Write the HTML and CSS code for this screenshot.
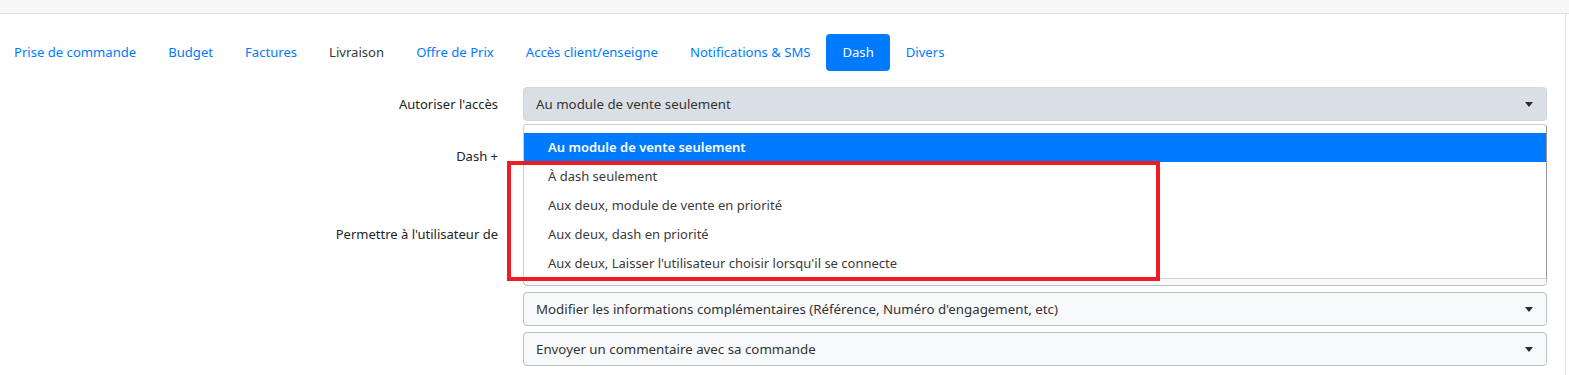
FILE: index.html
```html
<!DOCTYPE html>
<html>
<head>
    <meta charset="UTF-8">
    <title>Paramètres - Dash</title>
    <link rel="stylesheet" href="styles.css">
</head>
<body>
    <div class="topbar"></div>
    <div class="panel">
        <ul class="nav">
            <li><a class="nav-link">Prise de commande</a></li>
            <li><a class="nav-link">Budget</a></li>
            <li><a class="nav-link">Factures</a></li>
            <li><a class="nav-link muted">Livraison</a></li>
            <li><a class="nav-link">Offre de Prix</a></li>
            <li><a class="nav-link">Accès client/enseigne</a></li>
            <li><a class="nav-link">Notifications &amp; SMS</a></li>
            <li><a class="nav-link active">Dash</a></li>
            <li><a class="nav-link">Divers</a></li>
        </ul>

        <div class="form">
            <div class="form-row row-access">
                <label class="label">Autoriser l'accès</label>
                <div class="field">
                    <div class="select focused">
                        <span>Au module de vente seulement</span>
                        <span class="caret"></span>
                    </div>
                    <ul class="popup">
                        <li class="option selected">Au module de vente seulement</li>
                        <li class="option">À dash seulement</li>
                        <li class="option">Aux deux, module de vente en priorité</li>
                        <li class="option">Aux deux, dash en priorité</li>
                        <li class="option">Aux deux, Laisser l'utilisateur choisir lorsqu'il se connecte</li>
                    </ul>
                    <div class="highlight"></div>
                </div>
            </div>

            <!-- selects below sit under the open list, their values are hidden -->
            <div class="form-row row-dash">
                <label class="label">Dash +</label>
                <div class="field">
                    <div class="select plain">
                        <span class="caret"></span>
                    </div>
                </div>
            </div>

            <div class="form-row row-perms">
                <label class="label label-top">Permettre à l'utilisateur de</label>
                <div class="field stack">
                    <div class="select">
                        <span class="caret"></span>
                    </div>
                    <div class="select">
                        <span class="caret"></span>
                    </div>
                    <div class="select">
                        <span>Modifier les informations complémentaires (Référence, Numéro d'engagement, etc)</span>
                        <span class="caret"></span>
                    </div>
                    <div class="select">
                        <span>Envoyer un commentaire avec sa commande</span>
                        <span class="caret"></span>
                    </div>
                </div>
            </div>
        </div>
    </div>
</body>
</html>
```

FILE: styles.css
```css
/* Base */
* {
    margin: 0;
    padding: 0;
    box-sizing: border-box;
}

html, body {
    height: 100%;
    overflow: hidden;
}

body {
    font-family: 'Noto Sans', 'Open Sans', sans-serif;
    font-size: 13px;
    color: #212529;
    background-color: #fff;
}

.topbar {
    height: 14px;
    background-color: #f7f7f7;
    border-bottom: 1px solid #dedede;
}

.panel {
    width: 1566px;
    height: 361px;
    border-right: 1px solid #dee2e6;
    padding: 20px 18px 0 0;
}

/* Tabs */
.nav {
    display: flex;
    list-style: none;
    margin-left: -2px;
}

.nav-link {
    display: block;
    padding: 8px 16px;
    line-height: 21px;
    font-size: 13.1px;
    color: #007bff;
    border-radius: 4px;
    cursor: pointer;
}

.nav-link.muted {
    color: #343a40;
}

.nav-link.active {
    background-color: #007bff;
    color: #fff;
}

/* Form */
.form {
    margin-top: 16px;
}

.form-row {
    display: grid;
    grid-template-columns: 498px 1fr;
    column-gap: 25px;
}

.row-access {
    margin-bottom: 18px;
}

.row-dash {
    margin-bottom: 39px;
}

.label {
    text-align: right;
    line-height: 34px;
    color: #212529;
}

.label-top {
    line-height: 21px;
    padding-top: 12px;
}

.field {
    position: relative;
}

.stack {
    display: flex;
    flex-direction: column;
    gap: 6px;
}

.select {
    display: flex;
    justify-content: space-between;
    align-items: center;
    height: 34px;
    padding: 0 13px 0 12px;
    border: 1px solid #b9bfc6;
    border-radius: 4px;
    background-color: #f8f9fa;
    font-size: 13.3px;
    color: #333;
}

.select.focused {
    background-color: #dadfe6;
    border-color: #d3d8df;
}

.select.plain {
    background-color: #fff;
}

.caret {
    width: 0;
    height: 0;
    margin-left: auto;
    border-left: 4px solid transparent;
    border-right: 4px solid transparent;
    border-top: 5px solid #2b2b2b;
}

/* Open dropdown list */
.popup {
    position: absolute;
    top: 37px;
    left: 0;
    right: 0;
    z-index: 2;
    list-style: none;
    padding-top: 8px;
    background-color: #fff;
    border: 1px solid #cfcfcf;
    border-right-color: #9a9a9a;
    border-radius: 4px 4px 0 0;
}

.option {
    height: 29px;
    line-height: 29px;
    padding-left: 24px;
    color: #3b3b3b;
}

.option.selected {
    background-color: #007bff;
    color: #fff;
    font-weight: 600;
}

/* Annotation frame */
.highlight {
    position: absolute;
    z-index: 3;
    left: -16px;
    top: 74px;
    width: 653px;
    height: 120px;
    border: 4px solid #ee1c25;
}
```
